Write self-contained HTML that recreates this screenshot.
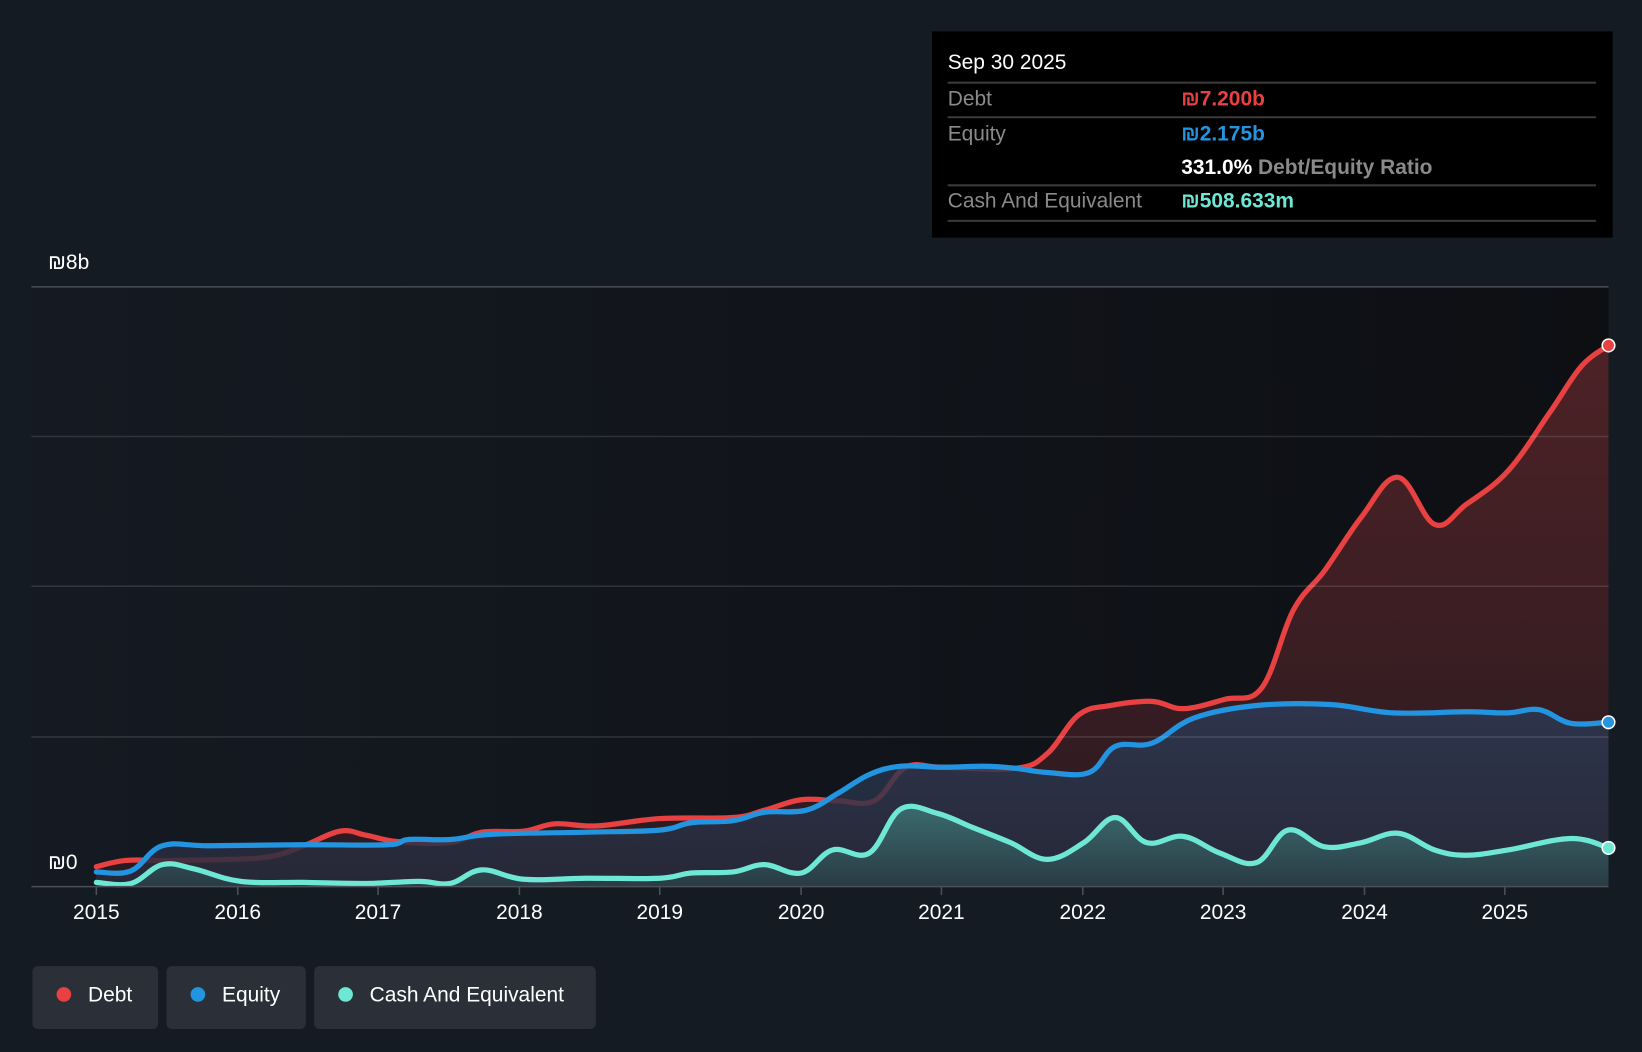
<!DOCTYPE html>
<html><head><meta charset="utf-8"><style>
html,body{margin:0;padding:0;background:#151b23;width:1642px;height:1052px;overflow:hidden}
svg{display:block;font-family:"Liberation Sans",sans-serif}
</style></head><body>
<svg id="s" width="1642" height="1052" viewBox="0 0 1568 1005" preserveAspectRatio="none">
<defs>
<linearGradient id="bg" x1="0" x2="1" y1="0" y2="0"><stop offset="0" stop-color="#151a22"/><stop offset="1" stop-color="#0d0f13"/></linearGradient>
<linearGradient id="df" x1="0" x2="0" y1="0" y2="1"><stop offset="0" stop-color="#4d2226"/><stop offset="1" stop-color="#2a1a20"/></linearGradient>
<linearGradient id="ef" x1="0" x2="0" y1="0" y2="1"><stop offset="0" stop-color="#2b3d5a" stop-opacity="0.75"/><stop offset="1" stop-color="#262a3a" stop-opacity="0.85"/></linearGradient>
<linearGradient id="cf" x1="0" x2="0" y1="0" y2="1"><stop offset="0" stop-color="#3f7a78" stop-opacity="0.8"/><stop offset="1" stop-color="#2a4048" stop-opacity="0.8"/></linearGradient>
</defs>
<rect width="1568" height="1005" fill="#151b23"/>
<rect x="30" y="274" width="1506" height="573" fill="url(#bg)"/>
<g fill="none" stroke-linejoin="round" stroke-linecap="round">
<path id="dF" fill="url(#df)"/>
<path id="dL" stroke="#e84142" stroke-width="5"/>
<path id="eF" fill="url(#ef)"/>
<path id="eL" stroke="#2394e0" stroke-width="5"/>
<path id="cF" fill="url(#cf)"/>
<path id="cL" stroke="#6ee8d4" stroke-width="5"/>
</g>
<g stroke="#ffffff" stroke-opacity="0.12" stroke-width="1.5">
<line x1="30" x2="1536" y1="417" y2="417"/><line x1="30" x2="1536" y1="560" y2="560"/><line x1="30" x2="1536" y1="704" y2="704"/>
</g>
<line x1="30" x2="1536" y1="274" y2="274" stroke="#444a55" stroke-width="1.5"/>
<line x1="30" x2="1536" y1="847" y2="847" stroke="#4a4f58" stroke-width="1.5"/>
<g stroke="#4a4f58" stroke-width="1.5">
<line x1="92" x2="92" y1="847" y2="855"/><line x1="227" x2="227" y1="847" y2="855"/><line x1="361" x2="361" y1="847" y2="855"/><line x1="496" x2="496" y1="847" y2="855"/><line x1="630" x2="630" y1="847" y2="855"/><line x1="765" x2="765" y1="847" y2="855"/><line x1="899" x2="899" y1="847" y2="855"/><line x1="1034" x2="1034" y1="847" y2="855"/><line x1="1168" x2="1168" y1="847" y2="855"/><line x1="1303" x2="1303" y1="847" y2="855"/><line x1="1437" x2="1437" y1="847" y2="855"/>
</g>
<circle cx="1536" cy="330" r="6" fill="#e84142" stroke="#fff" stroke-width="1.5"/>
<circle cx="1536" cy="690" r="6" fill="#2394e0" stroke="#fff" stroke-width="1.5"/>
<circle cx="1536" cy="810" r="6" fill="#6ee8d4" stroke="#fff" stroke-width="1.5"/>
<g fill="#fff" font-size="20">
<text x="46" y="257">₪8b</text><text x="46" y="830">₪0</text>
</g>
<g fill="#fff" font-size="20" text-anchor="middle">
<text x="92" y="878">2015</text><text x="227" y="878">2016</text><text x="361" y="878">2017</text><text x="496" y="878">2018</text><text x="630" y="878">2019</text><text x="765" y="878">2020</text><text x="899" y="878">2021</text><text x="1034" y="878">2022</text><text x="1168" y="878">2023</text><text x="1303" y="878">2024</text><text x="1437" y="878">2025</text>
</g>
<rect x="890" y="30" width="650" height="197" fill="#000"/>
<g stroke="#3a3a3a" stroke-width="2">
<line x1="905" x2="1524" y1="79" y2="79"/><line x1="905" x2="1524" y1="112" y2="112"/><line x1="905" x2="1524" y1="177" y2="177"/><line x1="905" x2="1524" y1="211" y2="211"/>
</g>
<g font-size="20">
<text x="905" y="66" fill="#fff">Sep 30 2025</text>
<text x="905" y="101" fill="#8a8a8a">Debt</text><text x="1128" y="101" fill="#e84142" font-weight="bold">₪7.200b</text>
<text x="905" y="134" fill="#8a8a8a">Equity</text><text x="1128" y="134" fill="#2394e0" font-weight="bold">₪2.175b</text>
<text x="1128" y="166" fill="#fff" font-weight="bold">331.0% <tspan fill="#8a8a8a">Debt/Equity Ratio</tspan></text>
<text x="905" y="198" fill="#8a8a8a">Cash And Equivalent</text><text x="1128" y="198" fill="#6ee8d4" font-weight="bold">₪508.633m</text>
</g>
<rect x="31" y="923" width="120" height="60" rx="5" fill="#2a2f38"/>
<rect x="159" y="923" width="133" height="60" rx="5" fill="#2a2f38"/>
<rect x="300" y="923" width="269" height="60" rx="5" fill="#2a2f38"/>
<circle cx="61" cy="950" r="7" fill="#e84142"/><circle cx="189" cy="950" r="7" fill="#2394e0"/><circle cx="330" cy="950" r="7" fill="#6ee8d4"/>
<g fill="#fff" font-size="20"><text x="84" y="957">Debt</text><text x="212" y="957">Equity</text><text x="353" y="957">Cash And Equivalent</text></g>
</svg>
<script>
function sm(p){var d="M"+p[0][0]+","+p[0][1];for(var i=0;i<p.length-1;i++){var a=p[i-1]||p[i],b=p[i],c=p[i+1],e=p[i+2]||c;var t=0.18;d+=" C"+(b[0]+(c[0]-a[0])*t)+","+(b[1]+(c[1]-a[1])*t)+" "+(c[0]-(e[0]-b[0])*t)+","+(c[1]-(e[1]-b[1])*t)+" "+c[0]+","+c[1];}return d;}
function P(s){return s.trim().split(/\s+/).map(function(q){return q.split(",").map(Number);});}
var D=P("92,828 120,822 160,822 220,821 260,818 290,808 325,794 350,798 380,804 430,805 460,795 500,794 530,787 570,789 630,782 700,781 730,774 765,764 800,765 835,765 865,733 900,733 970,734 1000,720 1030,683 1060,674 1100,670 1130,677 1170,668 1205,657 1235,583 1265,545 1300,494 1335,456 1370,501 1400,482 1440,450 1480,394 1510,350 1536,330");
var E=P("92,833 125,832 155,808 200,808 290,807 370,807 390,802 430,802 470,797 560,795 630,793 660,786 700,784 730,776 770,774 800,758 830,740 860,732 900,733 940,732 970,734 1000,738 1040,738 1065,713 1100,710 1140,686 1200,674 1270,673 1330,681 1400,680 1440,681 1470,678 1500,691 1536,690");
var C=P("92,843 125,844 155,826 185,830 230,842 290,843 350,844 400,842 430,844 460,831 500,840 560,839 630,839 660,834 700,833 730,826 765,834 795,812 830,815 860,773 895,777 930,791 965,805 1000,821 1035,805 1065,781 1095,805 1130,799 1165,815 1200,824 1230,793 1265,809 1300,805 1335,796 1370,812 1400,817 1440,812 1500,801 1536,810");
function set(l,f,p){var d=sm(p);document.getElementById(l).setAttribute("d",d);document.getElementById(f).setAttribute("d",d+" L1536,847 L92,847 Z");}
set("dL","dF",D);set("eL","eF",E);set("cL","cF",C);
</script>
</body></html>
